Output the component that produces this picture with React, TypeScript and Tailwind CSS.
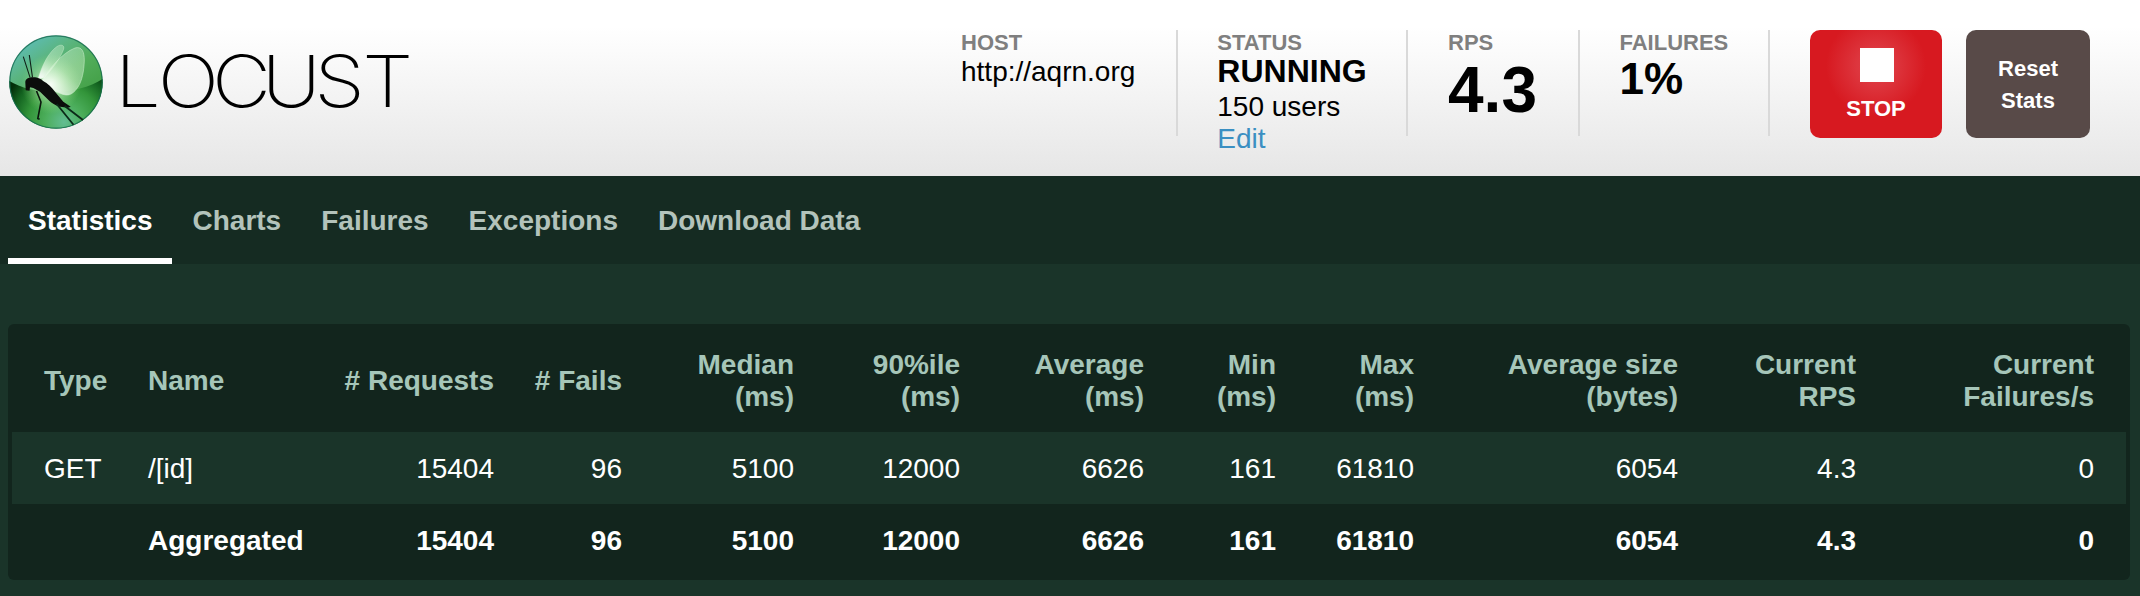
import type { ReactNode } from "react";

const tabs = ["Statistics", "Charts", "Failures", "Exceptions", "Download Data"];

const columns: { label: string[]; width: string }[] = [
  { label: ["Type"], width: "w-[116px]" },
  { label: ["Name"], width: "w-[196px]" },
  { label: ["# Requests"], width: "w-[190px]" },
  { label: ["# Fails"], width: "w-[128px]" },
  { label: ["Median", "(ms)"], width: "w-[172px]" },
  { label: ["90%ile", "(ms)"], width: "w-[166px]" },
  { label: ["Average", "(ms)"], width: "w-[184px]" },
  { label: ["Min", "(ms)"], width: "w-[132px]" },
  { label: ["Max", "(ms)"], width: "w-[138px]" },
  { label: ["Average size", "(bytes)"], width: "w-[264px]" },
  { label: ["Current", "RPS"], width: "w-[178px]" },
  { label: ["Current", "Failures/s"], width: "w-[250px]" },
];

const rows = [
  ["GET", "/[id]", "15404", "96", "5100", "12000", "6626", "161", "61810", "6054", "4.3", "0"],
  ["", "Aggregated", "15404", "96", "5100", "12000", "6626", "161", "61810", "6054", "4.3", "0"],
];

function cellClass(i: number) {
  const align = i < 2 ? "text-left" : "text-right";
  const pad = i === 0 ? "pl-8 pr-5" : i === 11 ? "pl-5 pr-8" : "px-5";
  return `${align} ${pad}`;
}

function Emblem() {
  return (
    <svg className="block h-24 w-24" viewBox="0 0 96 96">
      <defs>
        <linearGradient id="ball" x1="0.15" y1="0.05" x2="0.6" y2="0.7">
          <stop offset="0" stopColor="#5dbdb9" />
          <stop offset="0.35" stopColor="#5bb583" />
          <stop offset="0.7" stopColor="#52ad5a" />
          <stop offset="1" stopColor="#47a34c" />
        </linearGradient>
        <radialGradient id="shade" gradientUnits="userSpaceOnUse" cx="56" cy="88" r="62">
          <stop offset="0" stopColor="#62bd92" />
          <stop offset="0.3" stopColor="#4cae5c" />
          <stop offset="0.58" stopColor="#33953a" />
          <stop offset="0.82" stopColor="#136320" />
          <stop offset="1" stopColor="#03300a" />
        </radialGradient>
        <radialGradient id="glow" gradientUnits="userSpaceOnUse" cx="43" cy="50" r="30">
          <stop offset="0" stopColor="#fff" />
          <stop offset="0.25" stopColor="#eaffe4" stopOpacity="0.7" />
          <stop offset="1" stopColor="#8fe07f" stopOpacity="0" />
        </radialGradient>
        <linearGradient id="wing" x1="0.1" y1="0.9" x2="0.8" y2="0">
          <stop offset="0" stopColor="#fff" stopOpacity="0.85" />
          <stop offset="0.5" stopColor="#d8f7d4" stopOpacity="0.5" />
          <stop offset="1" stopColor="#c8f0c8" stopOpacity="0.4" />
        </linearGradient>
        <clipPath id="disc">
          <circle cx="48" cy="48" r="46.6" />
        </clipPath>
      </defs>
      <circle cx="48" cy="48" r="46.6" fill="url(#ball)" />
      <g clipPath="url(#disc)">
        <path d="M0 46C24 62 70 62 96 44V96H0Z" fill="url(#shade)" />
        <circle cx="48" cy="48" r="46" fill="url(#glow)" />
        <path d="M30 45C34 31 41 18 49 12.5C53 10 57 11 55.5 15.5C52 25 45 34 36 44Z" fill="url(#wing)" stroke="#d6f5d6" strokeOpacity="0.5" strokeWidth="0.8" />
        <path d="M34 46C42 34 54 19 67 14C74 12 76.5 18 76.3 27C76 37 74 47 70 53C66 59 62 61.5 58 61C50 60 40 54 34 46Z" fill="url(#wing)" stroke="#d6f5d6" strokeOpacity="0.6" strokeWidth="0.8" />
      </g>
      <circle cx="48" cy="48" r="46.2" fill="none" stroke="#13694f" strokeWidth="1.2" opacity="0.8" />
      <path d="M15.3 22.7L22 43.3M21.3 21L24.5 43.3" stroke="#102018" strokeWidth="1.1" fill="none" />
      <path d="M17.3 48C17.5 45 20 43.3 25.3 43.2C30 43.3 33.5 45 34.7 46.7C40 49.5 44 53.5 47 57.7L55.3 67.7L62.7 72.7L60 73.8L50.3 72.5C46 70.5 44 69 41.5 67L32 57.7L25.3 54L22 53.2L21.5 56.8L17.7 56.2Z" fill="#0b0d0b" />
      <path d="M28.5 57L33 68L29.8 84.5L31.6 85.3" stroke="#0b160d" strokeWidth="1.6" fill="none" />
      <path d="M48.7 70L65.5 90.7M56.7 72L75 86" stroke="#0b2a18" strokeWidth="1.8" fill="none" />
    </svg>
  );
}

function Stat({ label, width, children }: { label: string; width: string; children: ReactNode }) {
  return (
    <div className={`h-[106px] border-r-2 border-[#d9d9d9] whitespace-nowrap ${width}`}>
      <div className="h-[26px] text-[22px] leading-[26px] font-bold text-[#7f7f7f]">{label}</div>
      {children}
    </div>
  );
}

export default function App() {
  return (
    <div className="h-[596px] w-[2140px] overflow-hidden bg-[#1a3429] font-['Liberation_Sans',Arial,sans-serif] text-[28px] leading-8 text-white">
      <header className="flex h-44 justify-between bg-linear-to-b from-white from-15% to-[#e6e6e6] text-black">
        <div className="flex items-start pt-[34px] pl-2">
          <Emblem />
          <svg className="block h-24 w-[320px]" viewBox="104 34 320 96">
            <text
              transform="scale(1.13 1)"
              x="101.8 139.7 187.7 231.7 278.1 320.6"
              y="107.2"
              fontSize="72"
              fontFamily="Inter"
              fontWeight="200"
            >
              LOCUST
            </text>
          </svg>
        </div>
        <div className="flex pt-[30px] pr-[50px]">
          <Stat label="HOST" width="w-[257px] pl-10">
            http://aqrn.org
          </Stat>
          <Stat label="STATUS" width="w-[230px] pl-[39.3px]">
            <div className="text-[32px] leading-[30px] font-bold">RUNNING</div>
            <div className="pt-[5px]">150 users</div>
            <div className="text-[#3b8fc2]">Edit</div>
          </Stat>
          <Stat label="RPS" width="w-[172px] pl-10">
            <div className="pt-0.5 text-[64px] leading-[64px] font-bold">4.3</div>
          </Stat>
          <Stat label="FAILURES" width="w-[190px] pl-[39.5px]">
            <div className="text-[44px] leading-[46px] font-bold">1%</div>
          </Stat>
          <button className="ml-10 flex h-[108px] w-[132px] flex-col items-center rounded-[10px] bg-[radial-gradient(circle_at_66px_36px,#e04249_0px,#dd353d_20px,#d71920_50px)] pt-[18px] text-[22px] font-bold text-white">
            <span className="ml-0.5 h-[34px] w-[34px] bg-white" />
            <span className="pt-[11px]">STOP</span>
          </button>
          <button className="ml-6 h-[108px] w-[124px] rounded-[10px] bg-[#584a48] pt-0.5 text-[22px] font-bold text-white">
            Reset
            <br />
            Stats
          </button>
        </div>
      </header>

      <nav className="flex h-[88px] bg-[#152b22] pl-2 font-bold">
        {tabs.map((tab, i) => (
          <a
            key={tab}
            className={
              i === 0
                ? "mr-[0.5px] w-[164px] border-b-[6px] border-white px-5 pt-[29px] text-white"
                : "px-5 pt-[29px] text-[#b3c3bb]"
            }
          >
            {tab}
          </a>
        ))}
      </nav>

      <main className="pt-[60px] pr-[10px] pl-2">
        <div className="rounded-md bg-[#12251d] p-1">
          <table className="w-full table-fixed border-collapse">
            <thead>
              <tr className="h-[104px] text-[#a6c6b9]">
                {columns.map((col, i) => (
                  <th key={i} className={`${col.width} ${cellClass(i)} pt-0.5 align-middle whitespace-nowrap`}>
                    {col.label.map((line) => (
                      <div key={line}>{line}</div>
                    ))}
                  </th>
                ))}
              </tr>
            </thead>
            <tbody>
              {rows.map((row, r) => (
                <tr key={r} className={r === 0 ? "h-[72px] bg-[#1a3429]" : "h-[72px] font-bold"}>
                  {row.map((cell, i) => (
                    <td key={i} className={`${cellClass(i)} pt-0.5`}>
                      {cell}
                    </td>
                  ))}
                </tr>
              ))}
            </tbody>
          </table>
        </div>
      </main>
    </div>
  );
}
